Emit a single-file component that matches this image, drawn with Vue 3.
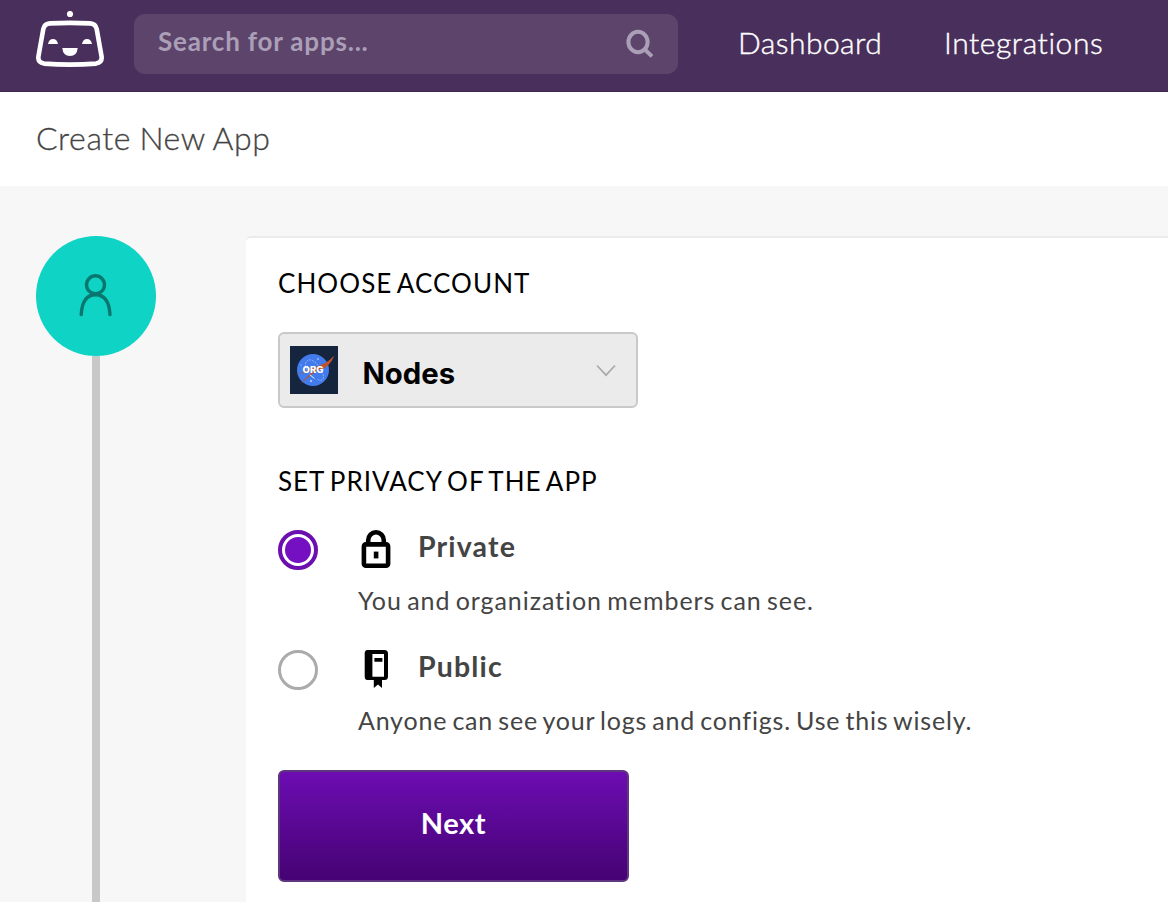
<script setup>
import { ref } from 'vue'

const privacy = ref('private')
const options = [
  { id: 'private', title: 'Private', text: 'You and organization members can see.' },
  { id: 'public', title: 'Public', text: 'Anyone can see your logs and configs. Use this wisely.' },
]
</script>

<template>
  <div class="page">
    <header class="topbar">
      <svg class="logo" width="68" height="58" viewBox="0 0 68 58" fill="none">
        <circle cx="34" cy="3" r="3.1" fill="#fff" />
        <path d="M14 12.4Q34 11.4 54 12.4Q59.5 12.8 60.7 18L65.6 45.5Q66.3 51.6 60 52.6Q34 54.6 8 52.6Q1.7 51.6 2.4 45.5L7.3 18Q8.5 12.8 14 12.4Z" stroke="#fff" stroke-width="4.6" />
        <path d="M12 33Q13 28 17 28T22 33ZM46 33Q47 28 51 28T56 33Z" fill="#fff" />
        <path d="M26.3 37H41.7Q41 45 34 45T26.3 37Z" fill="#fff" />
      </svg>
      <div class="search">
        <span class="placeholder">Search for apps...</span>
        <svg width="30" height="30" viewBox="0 0 30 30" fill="none" stroke="#ab9fb8" stroke-width="4">
          <ellipse cx="13" cy="13" rx="9.6" ry="10.2" />
          <path d="M19.3 20L27 27.4" />
        </svg>
      </div>
      <nav class="nav">
        <a class="dash">Dashboard</a>
        <a class="integ">Integrations</a>
      </nav>
    </header>

    <div class="titlebar"><h1>Create New App</h1></div>

    <div class="body">
      <aside class="steps">
        <div class="step">
          <svg width="36" height="46" viewBox="0 0 36 46" fill="none" stroke="#08776f" stroke-width="3.4" stroke-linecap="round">
            <circle cx="17.5" cy="11.8" r="9" />
            <path d="M3.2 41.6C4 28 9.5 21.8 17.5 21.8S31.2 28 32 41.6" />
          </svg>
        </div>
        <div class="line"></div>
      </aside>

      <main class="panel">
        <h2 class="h-account">Choose account</h2>
        <div class="select">
          <svg width="48" height="48" viewBox="0 0 48 48" fill="none">
            <rect width="48" height="48" fill="#14253d" />
            <circle cx="23" cy="24" r="16" fill="#417bec" />
            <path d="M25 33C17 27 13 18 17 15C21 11 29 18 33 28C35 34 31 36 27 33" stroke="#a9c4f8" stroke-width=".7" stroke-dasharray="2 1" />
            <path d="M6 29L22 22Q37 18 44 10Q40 20 28 24L10 38L25 23Z" fill="#b0573f" />
            <path d="M28 21Q38 17 44 10Q40 21 30 24Z" fill="#bd5429" />
            <circle cx="28" cy="13" r=".7" fill="#fff" />
            <circle cx="21" cy="35" r=".9" fill="#d6e3ff" />
            <circle cx="11" cy="19" r=".5" fill="#d6e3ff" />
            <path d="M20 29L24 32" stroke="#d6e3ff" />
            <text class="org" x="12.6" y="27" textLength="21" lengthAdjust="spacingAndGlyphs">ORG</text>
          </svg>
          <span class="name">Nodes</span>
          <svg class="chevron" width="20" height="14" viewBox="0 0 20 14" fill="none" stroke="#aaa" stroke-width="1.7">
            <path d="M1 1.5L10 11.2L19 1.5" />
          </svg>
        </div>

        <h2 class="h-privacy">Set privacy of the app</h2>
        <div
          v-for="o in options"
          :key="o.id"
          class="option"
          @click="privacy = o.id"
        >
          <span class="radio" :class="{ on: privacy === o.id }"></span>
          <div class="detail">
            <div class="label">
              <svg v-if="o.id === 'private'" width="36" height="40" viewBox="0 0 36 40">
                <path d="M10.2 14V10.3A7.8 8 0 0 1 25.8 10.3V14" fill="none" stroke="#000" stroke-width="4.6" />
                <rect x="5.9" y="14.4" width="24.2" height="21.3" rx="2" fill="none" stroke="#000" stroke-width="4.6" />
                <rect x="15.8" y="21.6" width="4.6" height="6.8" />
              </svg>
              <svg v-else width="36" height="40" viewBox="0 0 36 40">
                <path fill-rule="evenodd" d="M9.5 0H26.5Q30 0 30 3.5V26.5Q30 30 26.5 30H9.5Q6.7 30 6.7 26.5V3.5Q6.7 0 9.5 0ZM14.4 4V26.8H26V4Z" />
                <path d="M16.4 8H24.4V11.7H16.4ZM15.8 29.5H24V38L20 34.5L15.8 38Z" />
              </svg>
              <span>{{ o.title }}</span>
            </div>
            <p :class="o.id">{{ o.text }}</p>
          </div>
        </div>

        <button class="next">Next</button>
      </main>
    </div>
  </div>
</template>

<style>
html,
body {
  overflow: hidden;
}
</style>

<style scoped>
.page {
  width: 1168px;
  height: 902px;
  overflow: hidden;
  display: flex;
  flex-direction: column;
  background: #f7f7f7;
  font-family: Lato, "Liberation Sans", sans-serif;
  color: #444;
}
.topbar {
  height: 92px;
  box-sizing: border-box;
  padding: 14px 0 0 36px;
  display: flex;
  align-items: flex-start;
  background: #492f5b;
  border-bottom: 1px solid #42264f;
}
.logo {
  margin-top: -3px;
  margin-right: 30px;
}
.search {
  width: 544px;
  height: 60px;
  box-sizing: border-box;
  padding: 0 23px 0 24px;
  border-radius: 11px;
  background: #5c446b;
  display: flex;
  align-items: center;
  justify-content: space-between;
}
.placeholder {
  margin-top: -7px;
  font-size: 26px;
  line-height: 36px;
  font-weight: 700;
  letter-spacing: 0.8px;
  color: #ab9fb8;
}
.nav {
  display: flex;
  margin-left: 60px;
  gap: 61px;
  padding-top: 10px;
  font-size: 30px;
  line-height: 36px;
  font-weight: 300;
  color: #fff;
  white-space: nowrap;
  -webkit-text-stroke: 0.4px #fff;
}
.dash {
  width: 145px;
  letter-spacing: 0.45px;
}
.integ {
  letter-spacing: 0.55px;
}
.titlebar {
  height: 94px;
  background: #fff;
  padding-left: 36px;
}
h1 {
  margin: 0;
  padding-top: 25px;
  font-size: 32px;
  line-height: 42px;
  font-weight: 300;
  letter-spacing: 0.6px;
  word-spacing: -1px;
  -webkit-text-stroke: 0.3px #444;
}
.body {
  flex: 1;
  display: flex;
  padding-top: 50px;
  min-height: 0;
}
.steps {
  width: 120px;
  margin: 0 90px 0 36px;
  display: flex;
  flex-direction: column;
  align-items: center;
}
.step {
  width: 120px;
  height: 120px;
  flex: none;
  border-radius: 50%;
  background: #0fd4c5;
  display: flex;
  align-items: center;
  justify-content: center;
}
.line {
  width: 8px;
  flex: 1;
  background: #c8c8c8;
}
.panel {
  flex: 1;
  border-top: 2px solid #ebebeb;
  border-radius: 5px 0 0 0;
  background: #fff;
  padding: 27px 0 0 32px;
}
h2 {
  margin: 0;
  font-size: 26px;
  line-height: 36px;
  font-weight: 400;
  text-transform: uppercase;
  color: #000;
  white-space: nowrap;
  word-spacing: -2.5px;
}
.h-account {
  letter-spacing: 1.07px;
}
.select {
  width: 360px;
  height: 76px;
  box-sizing: border-box;
  margin: 31px 0 55px;
  padding: 0 20px 0 10px;
  border: 2px solid #c9c9c9;
  border-radius: 6px;
  background: #ebebeb;
  display: flex;
  align-items: center;
}
.org {
  font: 800 9px Inter, sans-serif;
  fill: #fff;
}
.name {
  margin: 8px auto 0 24.5px;
  font: 700 29.3px/36px Inter, "Liberation Sans", sans-serif;
  color: #000;
}
.chevron {
  margin-top: 2px;
}
.option {
  height: 120px;
  display: flex;
  align-items: flex-start;
}
.h-privacy {
  margin-bottom: 31px;
  letter-spacing: 1px;
}
.radio {
  width: 40px;
  height: 40px;
  box-sizing: border-box;
  border: 3px solid #ababab;
  border-radius: 50%;
}
.radio.on {
  border: 4px solid #6c0fb0;
  padding: 3px;
  background: #7410c2 content-box;
}
.detail {
  margin-left: 40px;
}
.label {
  height: 40px;
  display: flex;
  gap: 24px;
  font-size: 28.5px;
  line-height: 33px;
  font-weight: 700;
  letter-spacing: 1.15px;
}
p {
  margin: 12px 0 0;
  font-size: 25px;
  line-height: 36px;
  white-space: nowrap;
  word-spacing: -2px;
}
p.private {
  letter-spacing: 0.94px;
}
p.public {
  letter-spacing: 0.8px;
}
.next {
  display: block;
  width: 351px;
  height: 112px;
  padding: 0 0 7px;
  border: 2px solid #5f3580;
  border-radius: 6px;
  background: linear-gradient(#6c0cb2, #460373);
  color: #fff;
  font: 700 29px/36px Lato, "Liberation Sans", sans-serif;
  letter-spacing: 0.6px;
}
</style>
